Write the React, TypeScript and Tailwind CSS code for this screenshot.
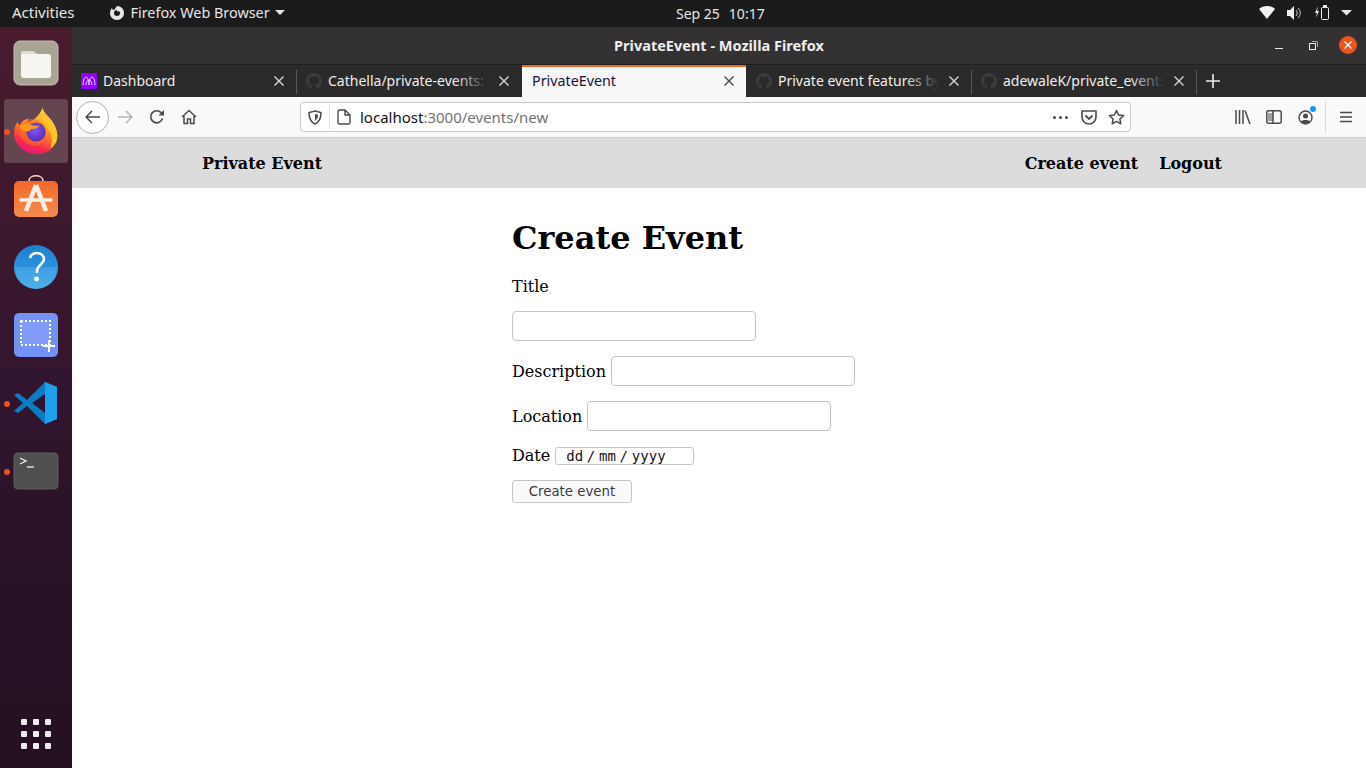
import React from "react";

const sans = { fontFamily: '"Noto Sans", Roboto, sans-serif' };
const mono = { fontFamily: '"DejaVu Sans Mono", monospace' };

function Files() {
  return (
    <svg width="48" height="48" viewBox="0 0 48 48">
      <rect x="2" y="2" width="44" height="44" rx="6" fill="#a9a594" stroke="#c4c0b2" strokeWidth="1" />
      <path d="M9 15a3 3 0 0 1 3-3h9l4 3h11a3 3 0 0 1 3 3v18a3 3 0 0 1-3 3H12a3 3 0 0 1-3-3z" fill="#f6f5f2" />
      <path d="M9 15a3 3 0 0 1 3-3h9l4 3H9z" fill="#dedbd2" />
    </svg>
  );
}

function Firefox() {
  return (
    <svg width="46" height="48" viewBox="0 0 48 50">
      <defs>
        <linearGradient id="ffa" x1="0.7" y1="0" x2="0.3" y2="1">
          <stop offset="0" stopColor="#ffdd3c" />
          <stop offset="0.45" stopColor="#ff8a1f" />
          <stop offset="0.8" stopColor="#f5294f" />
          <stop offset="1" stopColor="#e31587" />
        </linearGradient>
        <radialGradient id="ffb" cx="0.45" cy="0.4" r="0.6">
          <stop offset="0" stopColor="#7f5cf0" />
          <stop offset="1" stopColor="#5b2bb8" />
        </radialGradient>
      </defs>
      <path d="M31 1c1 6 6 8 10 14 4 6 6 12 5 18-2 10-11 16-21 16C12 49 2 40 1 28c0-5 1-9 4-13 0 2 1 3 2 4 2-4 5-6 9-7-1 2-1 3 0 4 6-2 11-7 15-15z" fill="url(#ffa)" />
      <path d="M31 1c1 6 6 8 10 14 4 6 6 12 5 18-1 5-4 8-7 10 3-8 2-16-4-22-4-4-6-12-4-20z" fill="#ffc629" />
      <path d="M7 27c-2-5 2-12 9-14 4-1 9 0 12 2 7 5 8 13 5 19-2 3-6 6-11 6-7 0-14-5-15-13z" fill="#f9731e" opacity="0.55" />
      <circle cx="24" cy="26" r="10" fill="url(#ffb)" />
      <path d="M7 20c4-3 9-3 13-1 3 1 6 1 8 0-2 3-5 4-9 4-1 2-4 3-6 2-2 0-5-2-6-5z" fill="#ff9a1f" />
    </svg>
  );
}

function Software() {
  return (
    <svg width="48" height="48" viewBox="0 0 48 48" className="-translate-y-[2px]">
      <defs>
        <linearGradient id="swa" x1="0" y1="0" x2="0" y2="1">
          <stop offset="0" stopColor="#f4682a" />
          <stop offset="1" stopColor="#f58b4e" />
        </linearGradient>
      </defs>
      <path d="M17 8c0-7 14-7 14 0" fill="none" stroke="#f0dfc6" strokeWidth="1.6" />
      <rect x="2" y="8" width="44" height="36" rx="5" fill="url(#swa)" />
      <path d="M24 12l-10 26M24 12l10 26" stroke="#fbeee6" strokeWidth="4.5" fill="none" />
      <path d="M9 27h30" stroke="#fbeee6" strokeWidth="3.5" strokeLinecap="round" />
    </svg>
  );
}

function Help() {
  return (
    <svg width="48" height="48" viewBox="0 0 48 48">
      <defs>
        <linearGradient id="hpa" x1="0" y1="0" x2="0" y2="1">
          <stop offset="0" stopColor="#1d80cf" />
          <stop offset="0.5" stopColor="#2a90dc" />
          <stop offset="0.5" stopColor="#3d9fe3" />
          <stop offset="1" stopColor="#4fb0e8" />
        </linearGradient>
      </defs>
      <circle cx="24" cy="24" r="22" fill="url(#hpa)" />
      <path d="M18 15c1-3 4-5 7-5 4 0 7 3 7 6 0 5-7 6-7 12v2" fill="none" stroke="#fff" strokeWidth="2.6" />
      <circle cx="24.5" cy="36" r="2.4" fill="#fff" />
    </svg>
  );
}

function Shot() {
  return (
    <svg width="48" height="48" viewBox="0 0 48 48">
      <rect x="2" y="2" width="44" height="44" rx="5" fill="#7392f6" />
      <rect x="9" y="10" width="29" height="24" fill="#8199f7" stroke="#fff" strokeWidth="2" strokeDasharray="2 2" />
      <path d="M37 29v12M31 35h12" stroke="#fff" strokeWidth="2" />
    </svg>
  );
}

function Code() {
  return (
    <svg width="46" height="44" viewBox="0 0 46 44">
      <path d="M32 1L14 19 5 12 1 14l9 8-9 8 4 2 9-7 18 18 12-5V6z" fill="#0a7cc4" />
      <path d="M32 1l12 5v32l-12 5z" fill="#1fa0ee" />
      <path d="M32 13L19 22l13 10z" fill="#2b1530" />
    </svg>
  );
}

function Terminal() {
  return (
    <svg width="48" height="38" viewBox="0 0 48 38">
      <rect x="2" y="1" width="44" height="36" rx="4" fill="#4f4f4d" stroke="#615f5c" />
      <path d="M8 6l6 3-6 3" fill="none" stroke="#f2f2f2" strokeWidth="1.3" />
      <path d="M15 15h7" stroke="#f2f2f2" strokeWidth="1.3" />
    </svg>
  );
}

function DockItem({ dot, active, children }: { dot?: boolean; active?: boolean; children: React.ReactNode }) {
  return (
    <div className="relative h-[68px] flex items-center justify-center">
      {active && <div className="absolute left-[4px] top-[2px] w-[64px] h-[64px] rounded-[3px] bg-[#654650]" />}
      {dot && <div className="absolute left-[4px] top-[32px] w-[6px] h-[6px] rounded-full bg-[#e9541f]" />}
      <div className="relative flex">{children}</div>
    </div>
  );
}

function Dock() {
  return (
    <div className="w-[72px] shrink-0 flex flex-col pt-[2px] pb-[19px] bg-gradient-to-b from-[#4a1b2d] via-[#31152e] to-[#230f20]">
      <DockItem><Files /></DockItem>
      <DockItem active dot><Firefox /></DockItem>
      <DockItem><Software /></DockItem>
      <DockItem><Help /></DockItem>
      <DockItem><Shot /></DockItem>
      <DockItem dot><Code /></DockItem>
      <DockItem dot><Terminal /></DockItem>
      <div className="mt-auto grid grid-cols-3 gap-x-[6px] gap-y-[6px] w-[30px] mx-auto">
        {[0, 1, 2, 3, 4, 5, 6, 7, 8].map((i) => (
          <div key={i} className="w-[6px] h-[6px] rounded-[1px] bg-[#f0eeee]" />
        ))}
      </div>
    </div>
  );
}

function TopBar() {
  return (
    <div className="h-[27px] shrink-0 bg-[#1b1b1b] text-[#e6e6e6] text-[14px] pb-[2px] flex items-center relative" style={sans}>
      <span className="ml-[12px] text-[15px]">Activities</span>
      <svg className="ml-[34px]" width="16" height="16" viewBox="0 0 16 16">
        <path d="M8 1c4 0 7 3 7 7s-3 7-7 7-7-3-7-7c0-2 1-4 2-5 0 1 1 2 2 2 1-1 2-3 3-4zM8 5a3 3 0 1 0 3 3c0-1-1-2-1-2-1 1-3 0-2-1z" fill="#e6e6e6" />
      </svg>
      <span className="ml-[6px] text-[14.400px]">Firefox Web Browser</span>
      <svg className="ml-[5px]" width="10" height="6" viewBox="0 0 10 6"><path d="M0 0h10L5 5z" fill="#e6e6e6" /></svg>
      <div className="absolute left-[676px] top-[3px] flex gap-[9px]">
        <span>Sep 25</span>
        <span>10:17</span>
      </div>
      <div className="ml-auto mr-[14px] flex items-center">
        <svg width="16" height="13" viewBox="0 0 16 13"><path d="M0 3c4-4 12-4 16 0L8 13z" fill="#f0f0f0" /></svg>
        <svg className="ml-[12px]" width="15" height="14" viewBox="0 0 15 14">
          <path d="M0 4h3l4-4v14l-4-4H0z" fill="#f0f0f0" />
          <path d="M9 4c1.500 1.500 1.500 4.500 0 6M11 2c3 3 3 7 0 10" fill="none" stroke="#cfcfcf" strokeWidth="1" />
        </svg>
        <svg className="ml-[13px]" width="15" height="15" viewBox="0 0 15 15">
          <path d="M3 1L0 8h2l-1 5 3-7H2z" fill="#f0f0f0" />
          <rect x="6.500" y="2.500" width="7" height="12" rx="1" fill="none" stroke="#f0f0f0" />
          <rect x="8" y="0" width="4" height="2" fill="#f0f0f0" />
        </svg>
        <svg className="ml-[11px]" width="11" height="6" viewBox="0 0 11 6"><path d="M0 0h11L5.500 5.500z" fill="#e6e6e6" /></svg>
      </div>
    </div>
  );
}

function Octocat() {
  return (
    <svg width="16" height="16" viewBox="0 0 16 16" className="shrink-0">
      <path fill="#3c3b3d" d="M8 0C3.580 0 0 3.580 0 8c0 3.540 2.290 6.530 5.470 7.590.4.070.55-.17.55-.38 0-.19-.010-.82-.010-1.490-2.010.37-2.530-.49-2.690-.94-.09-.23-.48-.94-.82-1.130-.28-.15-.68-.52-.01-.53.63-.010 1.080.58 1.230.82.72 1.210 1.870.87 2.330.66.070-.52.28-.87.51-1.070-1.780-.2-3.640-.89-3.640-3.950 0-.87.31-1.590.82-2.150-.08-.2-.36-1.020.08-2.120 0 0 .67-.21 2.200.82.64-.18 1.320-.27 2-.27s1.360.09 2 .27c1.530-1.040 2.200-.82 2.200-.82.44 1.100.16 1.920.08 2.120.51.560.82 1.270.82 2.150 0 3.070-1.870 3.750-3.650 3.950.29.250.54.730.54 1.480 0 1.070-.010 1.930-.010 2.200 0 .21.150.46.550.38A8.010 8.010 0 0 0 16 8c0-4.420-3.580-8-8-8z" />
    </svg>
  );
}

function CloseX({ color }: { color: string }) {
  return (
    <svg width="10" height="10" viewBox="0 0 10 10" className="shrink-0">
      <path d="M0.500 0.500l9 9M9.500 0.500l-9 9" stroke={color} strokeWidth="1.400" />
    </svg>
  );
}

function Tab({ title, icon, fade, sep = true }: { title: string; icon: React.ReactNode; fade?: boolean; sep?: boolean }) {
  return (
    <div className="relative w-[225px] h-full flex items-center pl-[9px] pr-[13px] pb-px">
      <div className="w-[16px] h-[16px] shrink-0 flex">{icon}</div>
      <div className="relative ml-[6px] flex-1 overflow-hidden whitespace-nowrap text-[14px] text-[#eeeeee]">
        {title}
        {fade && <div className="absolute right-0 top-0 bottom-0 w-[34px] bg-gradient-to-r from-transparent to-[#2b2a2b]" />}
      </div>
      <div className="ml-[10px]"><CloseX color="#d8d8d8" /></div>
      {sep && <div className="absolute right-0 top-[5px] h-[24px] w-px bg-[#5a595a]" />}
    </div>
  );
}

function ActiveTab() {
  return (
    <div className="relative w-[224px] mr-px h-full bg-[#f6f6f6] border-t-2 border-[#f0682c] flex items-center pl-[10px] pr-[12px] pb-[2px]">
      <span className="flex-1 text-[14.300px] text-[#20123a] whitespace-nowrap">PrivateEvent</span>
      <CloseX color="#4a4a4f" />
    </div>
  );
}

function Browser() {
  return (
    <div className="flex flex-col shrink-0" style={sans}>
      <div className="h-[37px] bg-[#333132] relative flex items-center justify-center">
        <span className="text-[14.500px] font-bold text-[#eeeeee]">PrivateEvent - Mozilla Firefox</span>
        <div className="absolute right-[9px] top-[9px] flex items-center">
          <div className="w-[8px] h-px bg-[#e8e8e8] mt-[6px]" />
          <svg className="ml-[26px]" width="9" height="9" viewBox="0 0 9 9">
            <rect x="0.500" y="2.500" width="6" height="6" fill="none" stroke="#e8e8e8" />
            <path d="M3 0.500h5.500V6" fill="none" stroke="#a8a8a8" />
          </svg>
          <div className="ml-[21px] w-[18px] h-[18px] rounded-full bg-[#e9541f] flex items-center justify-center">
            <svg width="8" height="8" viewBox="0 0 8 8"><path d="M0.500 0.500l7 7M7.500 0.500l-7 7" stroke="#fff" strokeWidth="1.200" /></svg>
          </div>
        </div>
      </div>
      <div className="h-[33px] bg-[#2b2a2b] border-t border-[#1f1e1f] flex items-center">
        <Tab
          title="Dashboard"
          icon={
            <svg width="16" height="16" viewBox="0 0 16 16">
              <rect width="16" height="16" fill="#9000ff" />
              <path d="M2 12c0-3 1-8 3-8s3 5 3 8c0-3 1-8 3-8s3 5 3 8M5 12c0-2 1-5 3-5s3 3 3 5" fill="none" stroke="#e9d5ff" strokeWidth="1" />
            </svg>
          }
        />
        <Tab title="Cathella/private-events: add" fade sep={false} icon={<Octocat />} />
        <ActiveTab />
        <Tab title="Private event features by ade" fade icon={<Octocat />} />
        <Tab title="adewaleK/private_events" fade icon={<Octocat />} />
        <svg className="ml-[9px]" width="14" height="14" viewBox="0 0 14 14"><path d="M7 0v14M0 7h14" stroke="#eeeeee" strokeWidth="1.600" /></svg>
      </div>
      <div className="h-[41px] bg-[#f9f9fa] border-b border-[#cfcfd1] flex items-center text-[#4a4a4f]">
        <div className="ml-[4px] w-[33px] h-[33px] rounded-full border border-[#b1b1b3] bg-white flex items-center justify-center">
          <svg width="16" height="14" viewBox="0 0 16 14"><path d="M15 7H1.500M7 1L1 7l6 6" fill="none" stroke="#4a4a4f" strokeWidth="1.500" /></svg>
        </div>
        <svg className="ml-[8px]" width="16" height="14" viewBox="0 0 16 14"><path d="M1 7h13.500M9 1l6 6-6 6" fill="none" stroke="#b4b4b6" strokeWidth="1.500" /></svg>
        <svg className="ml-[16px]" width="16" height="16" viewBox="0 0 16 16">
          <path d="M13.500 9.500A6 6 0 1 1 12 3.500L14 5.500" fill="none" stroke="#4a4a4f" strokeWidth="1.700" />
          <path d="M15 1v5.500H9.500z" fill="#4a4a4f" />
        </svg>
        <svg className="ml-[16px]" width="16" height="16" viewBox="0 0 16 16">
          <path d="M1 8l7-6.500L15 8M3 7v7.500h3.500V10h3v4.500H13V7" fill="none" stroke="#4a4a4f" strokeWidth="1.500" />
        </svg>
        <div className="ml-[103px] w-[831px] h-[30px] bg-white border border-[#c8c8ca] rounded-[4px] flex items-center">
          <svg className="ml-[7px]" width="14" height="15" viewBox="0 0 14 15">
            <path d="M7 1l6 1.500c0 6-1.500 9.500-6 11.500-4.500-2-6-5.500-6-11.500z" fill="none" stroke="#4a4a4f" strokeWidth="1.500" />
            <path d="M7 4l3 .8c0 3-1 4.700-3 5.700z" fill="#4a4a4f" />
          </svg>
          <div className="ml-[7px] w-px h-[24px] bg-[#dcdcde]" />
          <svg className="ml-[7px]" width="14" height="16" viewBox="0 0 14 16">
            <path d="M1 2.500A1.500 1.500 0 0 1 2.500 1H8l5 5v7.500a1.500 1.500 0 0 1-1.500 1.500h-9A1.500 1.500 0 0 1 1 13.500zM8 1v5h5" fill="none" stroke="#4a4a4f" strokeWidth="1.400" />
          </svg>
          <span className="ml-[9px] text-[15px] text-[#111] whitespace-nowrap">localhost<span className="text-[#737373]">:3000/events/new</span></span>
          <div className="ml-auto flex items-center">
            <div className="flex gap-[2px]">
              <div className="w-[3px] h-[3px] rounded-full bg-[#4a4a4f]" />
              <div className="w-[3px] h-[3px] rounded-full bg-[#4a4a4f] ml-[1px]" />
              <div className="w-[3px] h-[3px] rounded-full bg-[#4a4a4f] ml-[1px]" />
            </div>
            <svg className="ml-[13px]" width="16" height="15" viewBox="0 0 16 15">
              <path d="M1 1h14v6a7 7 0 0 1-14 0z" fill="none" stroke="#4a4a4f" strokeWidth="1.600" strokeLinejoin="round" />
              <path d="M4.500 5.500L8 9l3.500-3.500" fill="none" stroke="#4a4a4f" strokeWidth="1.800" />
            </svg>
            <svg className="ml-[11px] mr-[5px]" width="17" height="16" viewBox="0 0 17 16">
              <path d="M8.500 1.500l2.100 4.500 4.900.6-3.600 3.400.9 4.800-4.300-2.400-4.300 2.400.9-4.800L1.500 6.600l4.900-.6z" fill="none" stroke="#4a4a4f" strokeWidth="1.500" strokeLinejoin="round" />
            </svg>
          </div>
        </div>
        <svg className="ml-[104px]" width="16" height="14" viewBox="0 0 16 14">
          <path d="M1 0v14M4.500 0v14M8 0v14M10 0.500l5 13.500" stroke="#4a4a4f" strokeWidth="1.500" fill="none" />
        </svg>
        <svg className="ml-[15px]" width="16" height="14" viewBox="0 0 16 14">
          <rect x="0.800" y="0.800" width="14.400" height="12.400" rx="2" fill="none" stroke="#4a4a4f" strokeWidth="1.500" />
          <path d="M7 1v12" stroke="#4a4a4f" strokeWidth="1.500" />
          <path d="M2 3h5v8H2z" fill="#4a4a4f" opacity="0.5" />
        </svg>
        <div className="relative ml-[16px] w-[16px] h-[16px]">
          <svg width="15" height="15" viewBox="0 0 15 15" className="mt-px">
            <circle cx="7.500" cy="7.500" r="6.500" fill="none" stroke="#4a4a4f" strokeWidth="1.400" />
            <circle cx="7.500" cy="6" r="2.500" fill="#4a4a4f" />
            <path d="M3 11.500c1-2 8-2 9 0a6 6 0 0 1-9 0z" fill="#4a4a4f" />
          </svg>
          <div className="absolute -top-[3px] -right-[2px] w-[6px] h-[6px] rounded-full bg-[#0a9dff]" />
        </div>
        <div className="ml-[11px] w-px h-[32px] bg-[#dcdcde]" />
        <svg className="ml-[14px]" width="12" height="12" viewBox="0 0 12 12">
          <path d="M0 1.500h12M0 6h12M0 10.500h12" stroke="#4a4a4f" strokeWidth="1.600" />
        </svg>
      </div>
    </div>
  );
}

const inputCls = "block w-[244px] h-[30px] bg-white border border-[#c4c4c4] rounded-[4px]";

function Page() {
  return (
    <div className="flex-1 bg-white flex flex-col text-black" style={{ fontFamily: '"DejaVu Serif", serif' }}>
      <div className="h-[50px] pt-[2px] bg-[#dcdcdc] flex items-center justify-between pl-[130px] pr-[144px] text-[16px] font-bold">
        <span>Private Event</span>
        <div className="flex gap-[21px]">
          <span>Create event</span>
          <span>Logout</span>
        </div>
      </div>
      <div className="ml-[440px] flex flex-col items-start text-[16px]">
        <h1 className="text-[32px] font-bold leading-[38px] mt-[31px]">Create Event</h1>
        <label className="mt-[18px] h-[24px] leading-[24px]">Title</label>
        <input className={`${inputCls} mt-[12px]`} />
        <div className="mt-[15px] flex items-center gap-[5px]">
          <label className="pt-[2px]">Description</label>
          <input className={inputCls} />
        </div>
        <div className="mt-[15px] flex items-center gap-[5px]">
          <label className="pt-[2px]">Location</label>
          <input className={inputCls} />
        </div>
        <div className="mt-[13px] flex items-center gap-[5px]">
          <label>Date</label>
          <div className="w-[139px] h-[18px] border border-[#c4c4c4] rounded-[3px] bg-white pl-[10px] flex items-center text-[14px] leading-[16px] text-[#111] whitespace-pre" style={mono}>
            <span>dd</span>
            <span className="ml-[3.500px]">/</span>
            <span className="ml-[4px]">mm</span>
            <span className="ml-[3.500px]">/</span>
            <span className="ml-[4px]">yyyy</span>
          </div>
        </div>
        <button className="mt-[12px] w-[120px] h-[23px] border border-[#c4c4c4] rounded-[3px] bg-[#fafafa] text-[13.333px] leading-[20px] text-[#3a3a3a]" style={{ fontFamily: '"DejaVu Sans", sans-serif' }}>
          Create event
        </button>
      </div>
    </div>
  );
}

export default function App() {
  return (
    <div className="w-[1366px] h-[768px] overflow-hidden flex flex-col bg-white">
      <TopBar />
      <div className="flex-1 flex min-h-0">
        <Dock />
        <div className="flex-1 flex flex-col min-w-0">
          <Browser />
          <Page />
        </div>
      </div>
    </div>
  );
}
